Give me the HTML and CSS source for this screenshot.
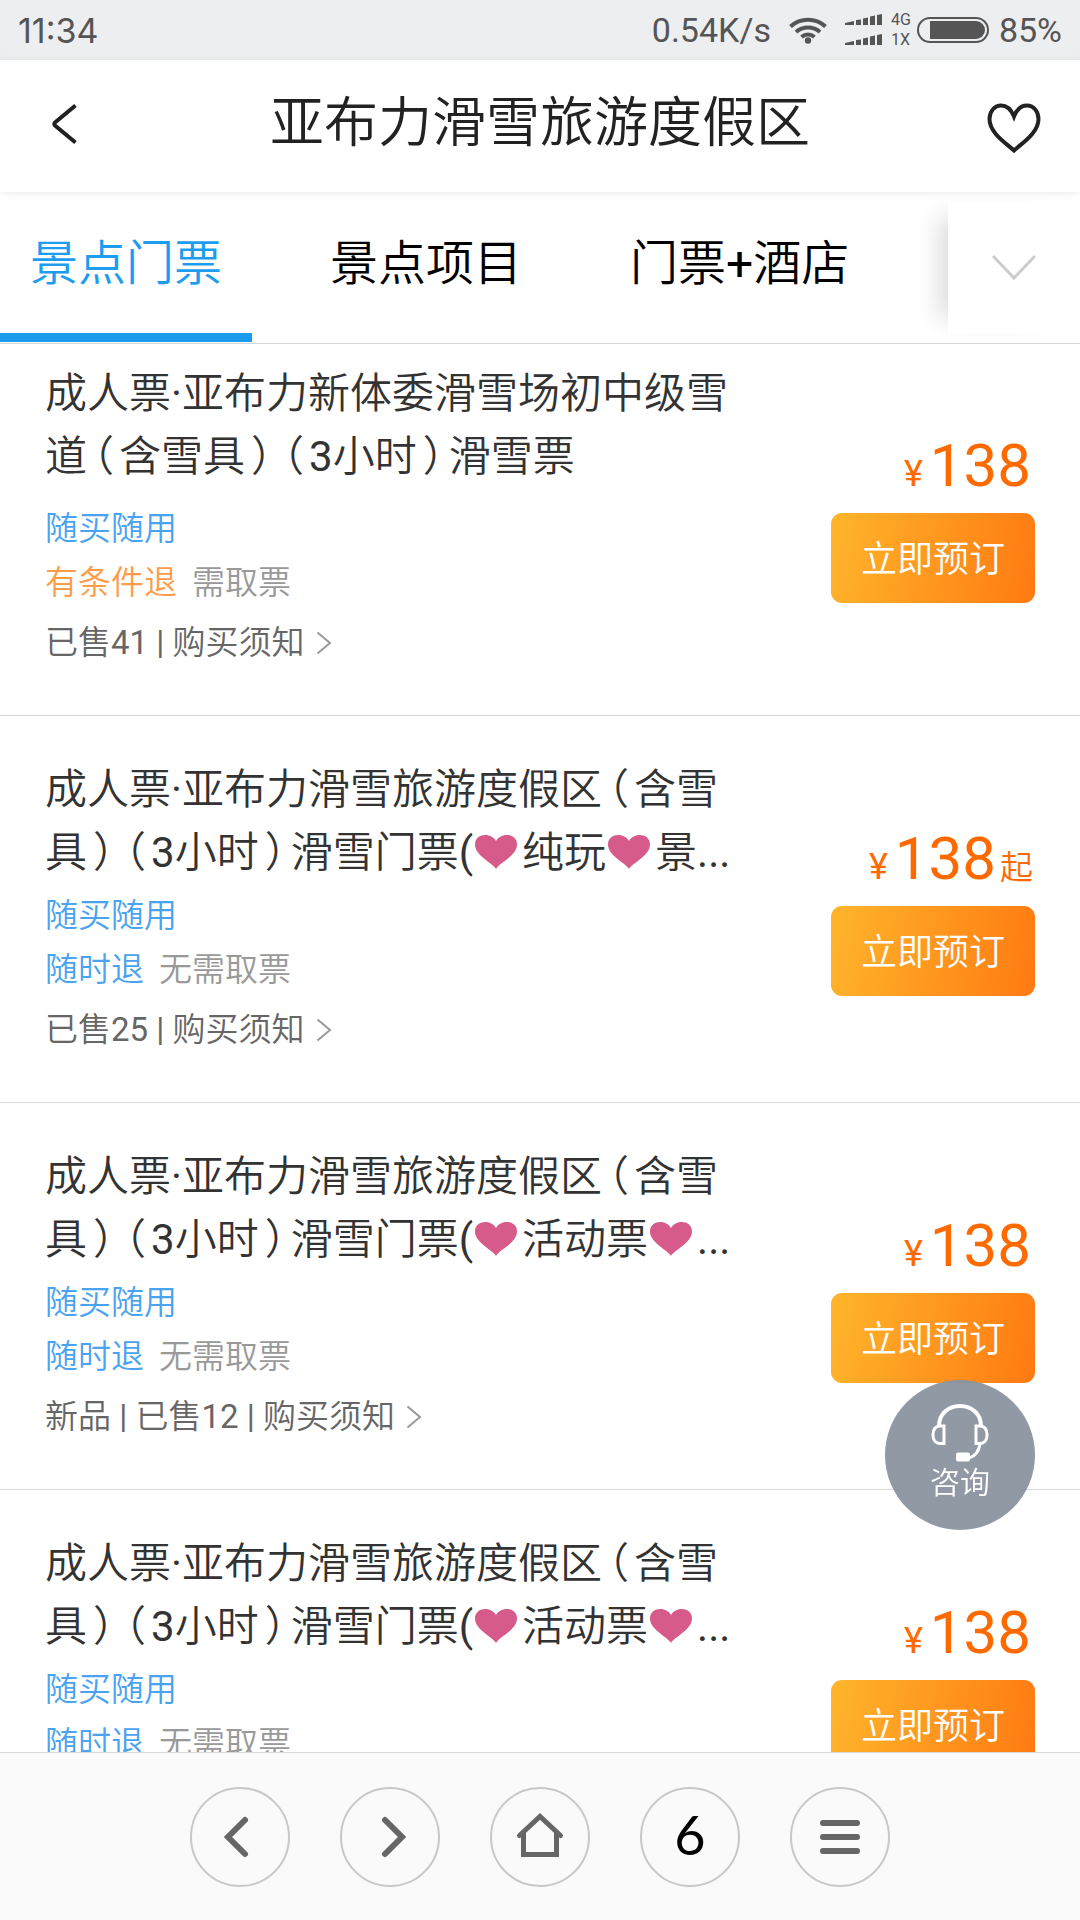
FILE: index.html
```html
<!DOCTYPE html>
<html lang="zh-CN">
<head>
<meta charset="utf-8">
<meta name="viewport" content="width=device-width, initial-scale=1">
<title>亚布力滑雪旅游度假区</title>
<link rel="stylesheet" href="styles.css">
</head>
<body>
<svg class="defs" aria-hidden="true">
  <symbol id="heart" viewBox="0 0 42 36"><path d="M21 35C18 29 0 22 0 10.500C0 4 5 1 10.500 1C15 1 19 3.500 21 7C23 3.500 27 1 31.500 1C37 1 42 4 42 10.500C42 22 24 29 21 35Z"/></symbol>
  <symbol id="arrow" viewBox="0 0 16 24"><path d="M1.500 1.500L14 12L1.500 22.500"/></symbol>
</svg>
<div class="app">
  <div class="status">
    <span class="status-time">11:34</span>
    <div class="status-right">
      <span>0.54K/s</span>
      <svg class="wifi" viewBox="0 0 38 28" width="38" height="28" aria-hidden="true">
        <g fill="none" stroke="#555" stroke-width="4"><path d="M1.500 10.500A26 26 0 0 1 36.500 10.500"/><path d="M7 16A18 18 0 0 1 31 16"/><path d="M12.500 21A10 10 0 0 1 25.500 21"/></g>
        <circle cx="19" cy="24.500" r="3.200" fill="#555"/>
      </svg>
      <svg class="signal" viewBox="0 0 37 32" width="37" height="32" fill="#555" aria-hidden="true">
        <path d="M0 9L9 7V11H0ZM11 6L16 5.500V11H11ZM18 4.500L23 3.500V11H18ZM25 2.500L30 1.500V11H25ZM32 1L37 0V11H32Z"/>
        <path transform="translate(0 20)" d="M0 9L9 7V11H0ZM11 6L16 5.500V11H11ZM18 4.500L23 3.500V11H18ZM25 2.500L30 1.500V11H25ZM32 1L37 0V11H32Z"/>
      </svg>
      <span class="network"><span>4G</span><span>1X</span></span>
      <svg class="battery" viewBox="0 0 72 26" width="72" height="26" aria-hidden="true">
        <rect x="1" y="1" width="70" height="24" rx="12" fill="none" stroke="#555" stroke-width="2"/>
        <path d="M13 4H59A9 9 0 0 1 59 22H13Z" fill="#555"/>
      </svg>
      <span>85%</span>
    </div>
  </div>

  <header class="header">
    <button class="icon-btn back" type="button" aria-label="返回"><svg viewBox="0 0 26 40" width="26" height="40"><path d="M23.500 1.500L3 18.500Q1.500 20 3 21.500L23.500 38.500"/></svg></button>
    <h1 class="title">亚布力滑雪旅游度假区</h1>
    <button class="icon-btn fav" type="button" aria-label="收藏"><svg viewBox="0 0 54 50" width="54" height="50"><path d="M27 13.500C24 6 19 2.500 14 2.500C7 2.500 2.500 9 2.500 16C2.500 30 19 40 27 47.500C35 40 51.500 30 51.500 16C51.500 9 47 2.500 40 2.500C35 2.500 30 6 27 13.500Z"/></svg></button>
  </header>

  <nav class="tabs">
    <div class="tab-list">
      <a class="tab tab-active" href="#">景点门票</a>
      <a class="tab" href="#">景点项目</a>
      <a class="tab" href="#">门票+酒店</a>
    </div>
    <button class="more" type="button" aria-label="展开"><svg viewBox="0 0 44 28" width="44" height="28"><path d="M1 2L22 24L43 2"/></svg></button>
  </nav>

  <main class="list">
    <article class="ticket ticket-first">
      <div class="info">
        <h2 class="name">成人票·亚布力新体委滑雪场初中级雪道<span class="paren">（</span>含雪具<span class="paren">）</span><span class="paren">（</span>3小时<span class="paren">）</span>滑雪票</h2>
        <p class="tags"><span class="blue">随买随用</span></p>
        <p class="tags"><span class="orange">有条件退</span><span>需取票</span></p>
        <a class="meta" href="#">已售41 | 购买须知<svg class="arrow" aria-hidden="true"><use href="#arrow"/></svg></a>
      </div>
      <div class="buy">
        <p class="price"><span class="yen">¥</span><span class="amount">138</span></p>
        <button class="book" type="button">立即预订</button>
      </div>
    </article>
    <article class="ticket">
      <div class="info">
        <h2 class="name">成人票·亚布力滑雪旅游度假区<span class="paren">（</span>含雪具<span class="paren">）</span><span class="paren">（</span>3小时<span class="paren">）</span>滑雪门票(<svg class="heart" aria-label="❤"><use href="#heart"/></svg>纯玩<svg class="heart" aria-label="❤"><use href="#heart"/></svg>景...</h2>
        <p class="tags"><span class="blue">随买随用</span></p>
        <p class="tags"><span class="blue">随时退</span><span>无需取票</span></p>
        <a class="meta" href="#">已售25 | 购买须知<svg class="arrow" aria-hidden="true"><use href="#arrow"/></svg></a>
      </div>
      <div class="buy">
        <p class="price"><span class="yen">¥</span><span class="amount">138</span><span class="from">起</span></p>
        <button class="book" type="button">立即预订</button>
      </div>
    </article>
    <article class="ticket">
      <div class="info">
        <h2 class="name">成人票·亚布力滑雪旅游度假区<span class="paren">（</span>含雪具<span class="paren">）</span><span class="paren">（</span>3小时<span class="paren">）</span>滑雪门票(<svg class="heart" aria-label="❤"><use href="#heart"/></svg>活动票<svg class="heart" aria-label="❤"><use href="#heart"/></svg>...</h2>
        <p class="tags"><span class="blue">随买随用</span></p>
        <p class="tags"><span class="blue">随时退</span><span>无需取票</span></p>
        <a class="meta" href="#">新品 | 已售12 | 购买须知<svg class="arrow" aria-hidden="true"><use href="#arrow"/></svg></a>
      </div>
      <div class="buy">
        <p class="price"><span class="yen">¥</span><span class="amount">138</span></p>
        <button class="book" type="button">立即预订</button>
      </div>
    </article>
    <article class="ticket">
      <div class="info">
        <h2 class="name">成人票·亚布力滑雪旅游度假区<span class="paren">（</span>含雪具<span class="paren">）</span><span class="paren">（</span>3小时<span class="paren">）</span>滑雪门票(<svg class="heart" aria-label="❤"><use href="#heart"/></svg>活动票<svg class="heart" aria-label="❤"><use href="#heart"/></svg>...</h2>
        <p class="tags"><span class="blue">随买随用</span></p>
        <p class="tags"><span class="blue">随时退</span><span>无需取票</span></p>
      </div>
      <div class="buy">
        <p class="price"><span class="yen">¥</span><span class="amount">138</span></p>
        <button class="book" type="button">立即预订</button>
      </div>
    </article>
  </main>

  <button class="consult" type="button">
    <svg viewBox="0 0 58 58" width="58" height="58" fill="none" stroke="#fff" stroke-width="4" aria-hidden="true">
      <path d="M8 22C8 10 17 2 29 2C41 2 50 10 50 22"/>
      <path stroke-width="3" d="M13 22V39.500H9C4 39.500 2 35 2 31C2 26 4 22 9 22ZM45 22V39.500H49C54 39.500 56 35 56 31C56 26 54 22 49 22Z"/>
      <path stroke-width="3" d="M49 40C48 47 45 52 38 54"/>
      <rect x="26" y="49.500" width="12" height="7" rx="1" fill="#fff" stroke-width="2"/>
    </svg>
    <span>咨询</span>
  </button>

  <nav class="toolbar">
    <button class="round" type="button" aria-label="后退"><svg viewBox="0 0 50 50" width="50" height="50"><path d="M30 8L13 25L30 42"/></svg></button>
    <button class="round" type="button" aria-label="前进"><svg viewBox="0 0 50 50" width="50" height="50"><path d="M20 8L37 25L20 42"/></svg></button>
    <button class="round" type="button" aria-label="主页"><svg viewBox="0 0 50 50" width="50" height="50"><path class="house" d="M4.500 23.500L25 4.500L45.500 23.500M8.500 21V42.500H41.500V21"/></svg></button>
    <button class="round count" type="button" aria-label="标签页 6">6</button>
    <button class="round" type="button" aria-label="菜单"><svg viewBox="0 0 50 50" width="50" height="50"><path d="M8 11H42M8 25H42M8 39H42"/></svg></button>
  </nav>
</div>
</body>
</html>
```
FILE: styles.css
```css
* { box-sizing: border-box; margin: 0; padding: 0; }

body {
  font-family: Roboto, "Noto Sans CJK SC DemiLight", "Noto Sans CJK SC", sans-serif;
  font-weight: 400;
  color: #333;
  background: #fff;
}

button { font: inherit; color: inherit; background: none; border: 0; cursor: pointer; }
a { color: inherit; text-decoration: none; }
svg { display: block; flex: none; }
.defs { position: absolute; width: 0; height: 0; }

.app { display: flex; flex-direction: column; height: 100vh; overflow: hidden; }

.status {
  flex: none;
  display: flex;
  align-items: center;
  justify-content: space-between;
  height: 60px;
  padding: 0 18px;
  background: #edeef0;
  color: #555;
  font-size: 34px;
}
.status-time { font-family: Inter, sans-serif; }
.status-right { display: flex; align-items: center; }
.wifi { margin-left: 18px; }
.signal { margin-left: 18px; }
.network {
  display: flex;
  flex-direction: column;
  margin: 0 6px 0 9px;
  font-size: 16px;
  line-height: 20px;
}
.battery { margin-right: 10px; }

.header {
  flex: none;
  position: relative;
  display: flex;
  justify-content: space-between;
  align-items: center;
  height: 132px;
  padding: 0 39px 4px;
  background: #fff;
  box-shadow: 0 1px 8px rgba(0, 0, 0, .08);
}
.title { font-size: 54px; line-height: 80px; font-weight: 400; color: #222; }
.icon-btn { display: flex; width: 54px; }
.icon-btn path { fill: none; stroke: #222; stroke-width: 4; }
.back { padding-left: 13px; }
.fav { padding-top: 8px; }

.tabs {
  flex: none;
  display: flex;
  justify-content: space-between;
  height: 152px;
  border-bottom: 1px solid #d5d5d5;
  overflow: hidden;
}
.tab-list { display: flex; gap: 48px; }
.tab {
  padding: 36px 30px 0;
  height: 150px;
  font-size: 48px;
  line-height: 72px;
  color: #000;
  white-space: nowrap;
  border-bottom: 9px solid transparent;
}
.tab-active { color: #1d9def; border-bottom-color: #1a9dee; }
.more {
  display: flex;
  justify-content: center;
  align-items: center;
  width: 132px;
  margin: 9px 0;
  background: #fff;
  box-shadow: -24px 0 24px -16px rgba(0, 0, 0, .15);
}
.more path { fill: none; stroke: #ccc; stroke-width: 3; }

.list { flex: 1; min-height: 0; overflow: hidden; }
.ticket {
  display: flex;
  justify-content: space-between;
  padding: 42px 45px 45px;
  border-bottom: 1px solid #d9d9d9;
}
.ticket-first { padding-top: 18px; }
.info { width: 700px; }
.name { font-size: 42px; line-height: 63px; font-weight: 400; margin-bottom: 5px; text-spacing-trim: space-all; }
.ticket-first .name { margin-bottom: 14px; }
.paren { margin: 0 5px 0 6px; font-feature-settings: "halt"; }
.heart { display: inline-block; width: 42px; height: 36px; margin: 0 5px 0 2px; vertical-align: -3px; fill: #d65a8a; }
.tags { display: flex; gap: 15px; font-size: 33px; line-height: 54px; color: #999; }
.blue { color: #4aa3f0; }
.orange { color: #ff9c4a; }
.meta { display: flex; align-items: center; margin-top: 6px; font-size: 33px; line-height: 54px; color: #666; }
.arrow { width: 16px; height: 24px; margin-left: 11px; fill: none; stroke: #999; stroke-width: 2; }

.buy { display: flex; flex-direction: column; align-items: flex-end; padding-top: 66px; }
.ticket-first .buy { padding-top: 69px; }
.price { display: flex; align-items: baseline; height: 82px; line-height: 70px; color: #ff6a00; }
.yen { font-size: 36px; margin-right: 7px; }
.amount { font-size: 60px; padding-right: 4px; }
.from { font-size: 33px; margin-right: 2px; }
.book {
  width: 204px;
  height: 90px;
  padding-bottom: 5px;
  border-radius: 11px;
  background: linear-gradient(100deg, #ffb52b, #ff7a12);
  color: #fff;
  font-size: 36px;
}

.consult {
  position: fixed;
  right: 45px;
  bottom: 390px;
  display: flex;
  flex-direction: column;
  align-items: center;
  width: 150px;
  height: 150px;
  padding-top: 24px;
  border-radius: 50%;
  background: rgba(138, 147, 159, .95);
  color: #fff;
  font-size: 30px;
  line-height: 42px;
}

.toolbar {
  flex: none;
  display: flex;
  justify-content: center;
  gap: 50px;
  padding: 34px 0 33px;
  background: #fafafa;
  border-top: 1px solid #d9d9d9;
}
.round {
  display: flex;
  justify-content: center;
  align-items: center;
  width: 100px;
  height: 100px;
  border: 2px solid #c8c8c8;
  border-radius: 50%;
}
.round path { fill: none; stroke: #666; stroke-width: 6; stroke-linecap: round; }
.round .house { stroke-width: 5; }
.count { padding-bottom: 6px; font-family: Lato, sans-serif; font-size: 54px; color: #000; }
```
